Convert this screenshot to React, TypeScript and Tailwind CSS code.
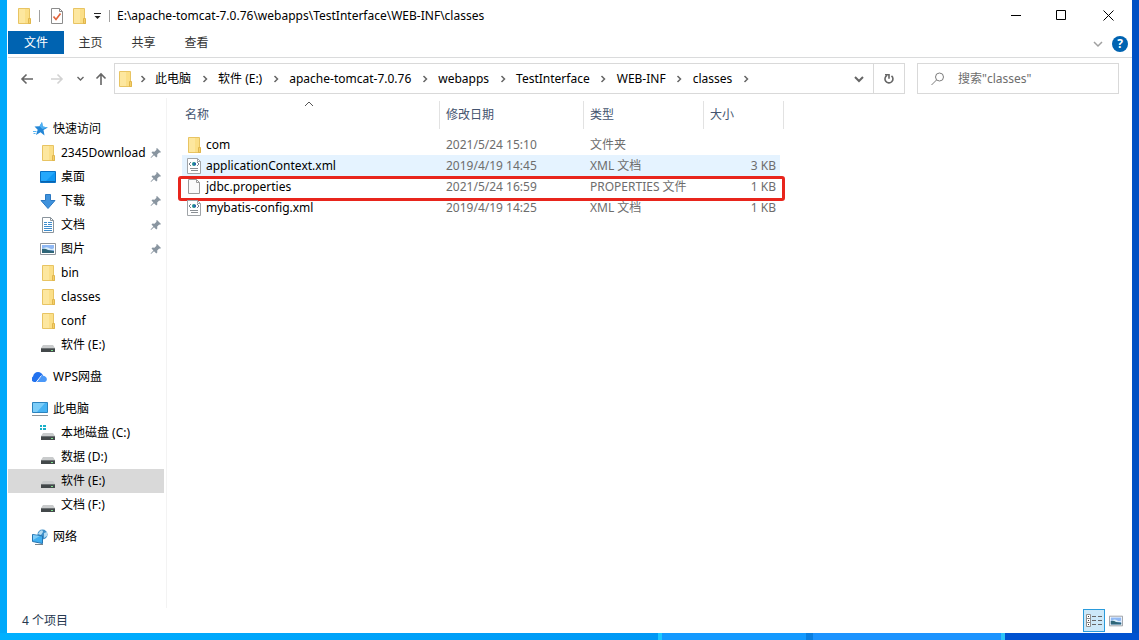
import React from "react";
import { clsx } from "clsx";

/* =======================
   DATA
======================= */

const crumbs = [
  "此电脑",
  "软件 (E:)",
  "apache-tomcat-7.0.76",
  "webapps",
  "TestInterface",
  "WEB-INF",
  "classes",
];

type IconName =
  | "star"
  | "folder"
  | "desktop"
  | "download"
  | "document"
  | "picture"
  | "drive"
  | "system"
  | "cloud"
  | "computer"
  | "network"
  | "xml"
  | "blank";

type NavItem = { label: string; icon: IconName; pinned?: boolean; active?: boolean };

const navGroups: { root: NavItem; items: NavItem[] }[] = [
  {
    root: { label: "快速访问", icon: "star" },
    items: [
      { label: "2345Download", icon: "folder", pinned: true },
      { label: "桌面", icon: "desktop", pinned: true },
      { label: "下载", icon: "download", pinned: true },
      { label: "文档", icon: "document", pinned: true },
      { label: "图片", icon: "picture", pinned: true },
      { label: "bin", icon: "folder" },
      { label: "classes", icon: "folder" },
      { label: "conf", icon: "folder" },
      { label: "软件 (E:)", icon: "drive" },
    ],
  },
  { root: { label: "WPS网盘", icon: "cloud" }, items: [] },
  {
    root: { label: "此电脑", icon: "computer" },
    items: [
      { label: "本地磁盘 (C:)", icon: "system" },
      { label: "数据 (D:)", icon: "drive" },
      { label: "软件 (E:)", icon: "drive", active: true },
      { label: "文档 (F:)", icon: "drive" },
    ],
  },
  { root: { label: "网络", icon: "network" }, items: [] },
];

type FileRow = {
  name: string;
  icon: IconName;
  date: string;
  type: string;
  size: string;
  hovered?: boolean;
  marked?: boolean;
};

const files: FileRow[] = [
  { name: "com", icon: "folder", date: "2021/5/24 15:10", type: "文件夹", size: "" },
  { name: "applicationContext.xml", icon: "xml", date: "2019/4/19 14:45", type: "XML 文档", size: "3 KB", hovered: true },
  { name: "jdbc.properties", icon: "blank", date: "2021/5/24 16:59", type: "PROPERTIES 文件", size: "1 KB", marked: true },
  { name: "mybatis-config.xml", icon: "xml", date: "2019/4/19 14:25", type: "XML 文档", size: "1 KB" },
];

/* =======================
   ICONS
======================= */

const Picture = () => (
  <>
    <path d="M.5 2.5h15v11H.5z" fill="#fff" stroke="#8f959b" />
    <path d="M2 4h12v8H2z" fill="#8fb8f4" />
    <path d="M2 8q4-3 7-1t5 0v2H2z" fill="#d9edf9" />
    <path d="M2 8q3-1 6 1l6 1v2H2z" fill="#2f6678" />
  </>
);

const Drive = () => (
  <>
    <path d="M3 8h10l2 3H1z" fill="#c9cbcc" />
    <path d="M1 11h14v4H1z" fill="#43484a" />
    <path d="M1 11h14v1H1z" fill="#6d7274" />
    <path d="M11 13h2v1h-2z" fill="#7ee08b" />
  </>
);

const shapes: Record<IconName, React.ReactNode> = {
  star: (
    <>
      <path d="m10 1 .8 4.600 5 .9-4.300 2.500 1 5.500-4-3.200L4 14l1.700-5.200L2.500 5.500l5-.2z" fill="#2386d6" />
      <path d="m10 1 .8 4.600 5 .9-5.500 1.500L7.500 5.300z" fill="#4fb2f4" />
      <path d="M1 10.500h3.500M1.500 12.500h2" stroke="#58b5f2" />
    </>
  ),
  folder: (
    <>
      <path d="M2.500.5h11v11l1 .5v3.500h-12z" fill="#fbdf88" stroke="#e8c463" />
      <path d="M3 1h6v14H3z" fill="#fde79f" />
      <path d="M12.500 10.500h2v5h-2z" fill="#f6d06a" stroke="#e0b64d" />
    </>
  ),
  desktop: (
    <>
      <path d="M.5 2.500h15v11H.5z" fill="#0f97f2" stroke="#0870c4" />
      <path d="M1 3h14L6 12H1z" fill="#25a8fb" />
      <path d="M1 12h14v1H1z" fill="#0a63ac" />
    </>
  ),
  download: <path d="M5.500 1.500h5v6h4.500L8 15.500l-7-8h4.500z" fill="#3f92dc" stroke="#2b78c2" />,
  document: (
    <>
      <path d="M2.500.5h8l3 3v12h-11z" fill="#fff" stroke="#8a949c" />
      <path d="M10.500.5v3h3" fill="none" stroke="#8a949c" />
      <path d="M4 5.500h3M4 7.500h3M8 5.500h4M8 7.500h4M4 9.500h8M4 11.500h8M4 13.500h8" stroke="#3d8ccd" />
    </>
  ),
  picture: <Picture />,
  drive: <Drive />,
  system: (
    <>
      <path d="M0 0h2v2H0zM3 0h3v2H3zM0 3h2v2H0zM3 3h3v2H3z" fill="#19b0c8" />
      <Drive />
    </>
  ),
  cloud: (
    <>
      <path d="M2 13a3 3 0 0 1-1-5.500Q2 3 6 3q3.500 0 5 3.500L5.500 13z" fill="#2272ee" />
      <path d="M5.500 13 9.500 7.500q2-1.500 3.700 0A3 3 0 0 1 13 13z" fill="#4a98f8" />
      <path d="m4 13.500 5.500-7" stroke="#fff" />
    </>
  ),
  computer: (
    <>
      <path d="M.5 1.500h15v10H.5z" fill="#47b3f3" stroke="#2b83be" />
      <path d="M1 2h12L5 11H1z" fill="#7ccdf8" />
      <path d="M0 14.500h16" stroke="#8d9499" />
    </>
  ),
  network: (
    <>
      <circle cx="10.500" cy="5.500" r="5" fill="#3d8fc9" />
      <path d="M8 2q3-2 3 1L9 6 6 5zM12 4l3-1v4l-3 2z" fill="#b5dcf2" />
      <path d="M.5 5.500 10.500 7v7.500L.5 12.500z" fill="#3faef0" stroke="#2574b0" />
      <path d="M1 6l7 1-7 4z" fill="#7fcdf8" />
      <path d="M3 15.500h8" stroke="#77838b" />
    </>
  ),
  xml: (
    <>
      <path d="M1.500.5h10l3 3v12h-13z" fill="#fff" stroke="#a0a4a8" />
      <path d="M11.500.5v3h3" fill="none" stroke="#a0a4a8" />
      <path d="M5 4 3 6l2 2M11 4l2 2-2 2" fill="none" stroke="#77808a" />
      <circle cx="8" cy="6" r="2" fill="#1e8d8f" />
      <path d="M8 5h2v2H8z" fill="#2d62b0" />
      <path d="M4 10.500h8M5 12.500h7" stroke="#8a8f94" />
    </>
  ),
  blank: (
    <>
      <path d="M2.500.5h8l3 3v11h-11z" fill="#fafafa" stroke="#9a9a9a" />
      <path d="M10.500.5v3h3" fill="none" stroke="#9a9a9a" />
    </>
  ),
};

const Icon = ({ name }: { name: IconName }) => (
  <svg viewBox="0 0 16 16" className="h-4 w-4 shrink-0" aria-hidden="true">
    {shapes[name]}
  </svg>
);

const Chevron = ({ className, weight = 2 }: { className?: string; weight?: number }) => (
  <svg viewBox="0 0 10 10" className={clsx("h-[10px] w-[10px]", className)} fill="none" aria-hidden="true">
    <path d="m1 3 4 4 4-4" stroke="currentColor" strokeWidth={weight} />
  </svg>
);

const Pin = () => (
  <svg viewBox="0 0 12 12" className="h-3 w-3 shrink-0" aria-hidden="true">
    <path d="m7 1 4 4-1 .8-.8-.2-2 2 .1 2-1 .9-2.300-2.300L1 11l-.4-.4 2.800-3L1.500 5.500l1-.9 2 .1 2-2-.3-.9z" fill="#8995a0" />
  </svg>
);

/* =======================
   WINDOW BARS
======================= */

const TitleBar = () => (
  <header className="flex h-[31px] items-center">
    <div className="flex items-center pl-2">
      <Icon name="folder" />
      <span className="mx-[7px] h-3 w-px bg-[#a0a0a0]" />
      <button aria-label="属性" className="ml-[2px] flex">
        <svg viewBox="0 0 16 16" className="h-4 w-4">
          <path d="M2.500.5h8l3 3v12h-11z" fill="#fff" stroke="#8c8c8c" />
          <path d="M10.500.5v3h3" fill="none" stroke="#8c8c8c" />
          <path d="m4.500 8.500 2.500 3 4.500-6" fill="none" stroke="#e0643c" strokeWidth="1.700" />
        </svg>
      </button>
      <button aria-label="新建文件夹" className="ml-[6px] flex">
        <Icon name="folder" />
      </button>
      <button aria-label="自定义快速访问工具栏" className="ml-[6px] flex">
        <svg viewBox="0 0 9 9" className="h-[9px] w-[9px]">
          <path d="M1 2.500h7" stroke="#222" />
          <path d="M1.500 5h6l-3 3z" fill="#222" />
        </svg>
      </button>
      <span className="mx-[7px] h-3 w-px bg-[#a0a0a0]" />
    </div>
    <h1 className="flex-1 text-black">E:\apache-tomcat-7.0.76\webapps\TestInterface\WEB-INF\classes</h1>
    <div className="flex h-full">
      <button aria-label="最小化" className="flex w-[45px] items-center justify-center">
        <svg viewBox="0 0 11 11" className="h-[11px] w-[11px]">
          <path d="M0 5.500h10" stroke="#000" />
        </svg>
      </button>
      <button aria-label="最大化" className="flex w-[45px] items-center justify-center">
        <svg viewBox="0 0 11 11" className="h-[11px] w-[11px]">
          <path d="M.5.5h9v9h-9z" fill="none" stroke="#000" />
        </svg>
      </button>
      <button aria-label="关闭" className="flex w-12 items-center justify-center">
        <svg viewBox="0 0 11 11" className="h-[11px] w-[11px]">
          <path d="m.5.500 10 10M10.500.5l-10 10" stroke="#000" />
        </svg>
      </button>
    </div>
  </header>
);

const Ribbon = () => (
  <div className="flex h-[27px] items-start border-b border-[#dadbdc]">
    <button className="h-[23px] w-14 bg-[#0063b1] pt-px text-white">文件</button>
    {["主页", "共享", "查看"].map((tab) => (
      <button key={tab} className="h-[23px] w-[53px] pt-px text-[#333]">
        {tab}
      </button>
    ))}
    <div className="ml-auto flex h-[26px] items-center gap-[9px] pr-1">
      <button aria-label="展开功能区" className="flex text-[#a0a0a0]">
        <Chevron weight={1.5} />
      </button>
      <button
        aria-label="帮助"
        className="flex h-4 w-4 items-center justify-center rounded-full bg-[#0063b1] text-xs font-bold text-white"
      >
        ?
      </button>
    </div>
  </div>
);

const AddressBar = () => (
  <div className="flex items-center pt-[5px] pr-[13px] pb-1">
    <div className="flex w-[106px] items-center pl-3 text-[#666]">
      <button aria-label="后退" className="flex">
        <svg viewBox="0 0 14 14" className="h-[14px] w-[14px]" fill="none">
          <path d="M13 7H2M6.500 2.500 2 7l4.500 4.500" stroke="currentColor" strokeWidth="1.600" />
        </svg>
      </button>
      <button aria-label="前进" disabled className="ml-4 flex text-[#d2d2d2]">
        <svg viewBox="0 0 14 14" className="h-[14px] w-[14px]" fill="none">
          <path d="M1 7h11M7.500 2.500 12 7l-4.500 4.500" stroke="currentColor" strokeWidth="1.600" />
        </svg>
      </button>
      <button aria-label="最近浏览的位置" className="ml-[13px] flex">
        <svg viewBox="0 0 7 7" className="h-[7px] w-[7px]" fill="none">
          <path d="m.5 2 3 3 3-3" stroke="currentColor" strokeWidth="1.400" />
        </svg>
      </button>
      <button aria-label="向上" className="ml-[10px] flex">
        <svg viewBox="0 0 14 14" className="h-[14px] w-[14px]" fill="none">
          <path d="M7 13V2M2.500 6.500 7 2l4.500 4.500" stroke="currentColor" strokeWidth="1.600" />
        </svg>
      </button>
    </div>
    <nav aria-label="地址" className="flex h-[31px] flex-1 items-center border border-[#d9d9d9] pl-[2px]">
      <Icon name="folder" />
      <Chevron className="mr-[7px] ml-[5px] -rotate-90 scale-75 text-[#666]" />
      {crumbs.map((crumb) => (
        <React.Fragment key={crumb}>
          <button className="whitespace-nowrap text-black">{crumb}</button>
          <span className="flex w-[27px] shrink-0 justify-center text-[#666]">
            <Chevron className="-rotate-90 scale-75" />
          </span>
        </React.Fragment>
      ))}
      <button aria-label="历史记录" className="ml-auto flex h-full w-7 items-center justify-center text-[#666]">
        <Chevron />
      </button>
      <button
        aria-label="刷新"
        className="flex h-full w-[31px] items-center justify-center border-l border-[#d9d9d9] text-[#666]"
      >
        <svg viewBox="0 0 12 12" className="h-3 w-3" fill="none">
          <path d="M8.500 2.800A4 4 0 1 1 4 2.400" stroke="currentColor" strokeWidth="1.600" />
          <path d="M2 1.700h4v4" stroke="currentColor" strokeWidth="1.600" />
        </svg>
      </button>
    </nav>
    <label className="ml-3 flex h-[31px] w-[202px] items-center border border-[#d9d9d9] pl-[13px]">
      <svg viewBox="0 0 14 14" className="mr-[13px] h-[14px] w-[14px] shrink-0" fill="none">
        <circle cx="8.500" cy="5" r="4" stroke="#7d7d7d" />
        <path d="m5.500 8-5 5" stroke="#7d7d7d" />
      </svg>
      <input
        type="text"
        aria-label="搜索"
        placeholder={'搜索"classes"'}
        className="w-full min-w-0 bg-transparent outline-none placeholder:text-[#6d6d6d]"
      />
    </label>
  </div>
);

/* =======================
   CONTENT
======================= */

const NavEntry = ({ item, nested }: { item: NavItem; nested?: boolean }) => (
  <a
    href="#"
    className={clsx(
      "flex h-6 items-center gap-[5px] pr-[2px] text-black",
      nested ? "pl-8" : "pl-6",
      item.active && "bg-[#d9d9d9]"
    )}
  >
    <Icon name={item.icon} />
    <span className="min-w-0 flex-1 whitespace-nowrap">{item.label}</span>
    {item.pinned && <Pin />}
  </a>
);

const Sidebar = () => (
  <aside className="w-[159px] shrink-0 border-r border-[#f3f3f3] pt-[19px] pr-[2px]">
    <nav aria-label="导航窗格" className="flex flex-col gap-2">
      {navGroups.map(({ root, items }) => (
        <div key={root.label}>
          <NavEntry item={root} />
          {items.map((item) => (
            <NavEntry key={item.label} item={item} nested />
          ))}
        </div>
      ))}
    </nav>
  </aside>
);

const columns = ["名称", "修改日期", "类型", "大小"];

const FileTable = () => (
  <table className="w-[602px] table-fixed border-collapse text-left">
    <colgroup>
      <col className="w-[258px]" />
      <col className="w-36" />
      <col className="w-[120px]" />
      <col className="w-[76px]" />
      <col className="w-1" />
    </colgroup>
    <thead>
      <tr>
        {columns.map((column, i) => (
          <th
            key={column}
            colSpan={i === 3 ? 2 : 1}
            aria-sort={i === 0 ? "ascending" : undefined}
            className="relative p-0 pt-[2px] pb-[5px] font-normal text-[#44546f]"
          >
            {i === 0 && <Chevron weight={1} className="absolute top-0 left-[122px] rotate-180 text-[#555]" />}
            <div className={clsx("flex h-7 items-center border-r border-[#e2e2e2]", i === 0 ? "pl-[3px]" : "pl-[6px]")}>
              {column}
            </div>
          </th>
        ))}
      </tr>
    </thead>
    <tbody className="text-[#6d6d6d]">
      {files.map((file) => (
        <tr key={file.name} className="relative h-[21px]">
          <td className={clsx("p-0", file.hovered && "bg-[#e5f3ff]")}>
            <div className="flex items-center gap-1 pl-1 text-black">
              <Icon name={file.icon} />
              {file.name}
            </div>
            {file.marked && (
              <span className="pointer-events-none absolute top-0 -right-px -bottom-1 -left-1 rounded-[3px] border-[3px] border-[#e8251c]" />
            )}
          </td>
          <td className={clsx("p-0 pl-[6px]", file.hovered && "bg-[#e5f3ff]")}>{file.date}</td>
          <td className={clsx("p-0 pl-[6px]", file.hovered && "bg-[#e5f3ff]")}>{file.type}</td>
          <td className={clsx("p-0 pr-1 text-right", file.hovered && "bg-[#e5f3ff]")}>{file.size}</td>
          <td className="p-0" />
        </tr>
      ))}
    </tbody>
  </table>
);

const StatusBar = () => (
  <footer className="flex h-[25px] items-center pl-[14px] text-[#26384f]">
    <span className="flex-1">4 个项目</span>
    <button
      aria-label="详细信息"
      className="flex h-[23px] w-[22px] items-center justify-center border border-[#2a9bdc] bg-[#cce8f8]"
    >
      <svg viewBox="0 0 16 13" className="h-[13px] w-4" fill="none">
        <path d="M.5.5h4v12h-4zM.5 4.500h4M.5 8.500h4" fill="#fff" stroke="#8f8f8f" />
        <path d="M2 2h1v1H2zM2 6h1v1H2zM2 10h1v1H2z" fill="#333" />
        <path d="M6 2.500h4M12 2.500h4M6 6.500h4M12 6.500h4M6 10.500h4M12 10.500h4" stroke="#666" />
      </svg>
    </button>
    <button aria-label="大图标" className="mr-[9px] ml-1 flex">
      <svg viewBox="0 0 16 16" className="h-[14px] w-[14px]">
        <Picture />
      </svg>
    </button>
  </footer>
);

/* =======================
   DESKTOP
======================= */

// strip of wallpaper left visible under the window
const Wallpaper = () => (
  <div className="flex h-[7px]" aria-hidden="true">
    <div className="flex-[658] bg-linear-to-r from-[#00b0ff] to-[#0098f5]" />
    <div className="w-1 bg-[#1cc8ff]" />
    <div className="flex-[144] bg-[#149aff]" />
    <div className="w-[7px] bg-[#0a7fe0]" />
    <div className="flex-[188] bg-[#1c94ff]" />
    <div className="w-1 bg-[#2cc4f8]" />
    <div className="flex-[134] bg-[#0052d0]" />
  </div>
);

export default function App() {
  return (
    <div className="flex min-h-screen flex-col bg-linear-to-r from-[#00a8fa] from-50% to-[#0050c4] to-50% font-['Noto_Sans','Noto_Sans_CJK_SC',sans-serif] text-xs leading-4">
      <div className="mx-[7px] flex flex-1 flex-col bg-white pl-px">
        <TitleBar />
        <Ribbon />
        <AddressBar />
        <div className="flex flex-1">
          <Sidebar />
          <main className="flex-1 pt-px pl-[15px]">
            <FileTable />
          </main>
        </div>
        <StatusBar />
      </div>
      <Wallpaper />
    </div>
  );
}
